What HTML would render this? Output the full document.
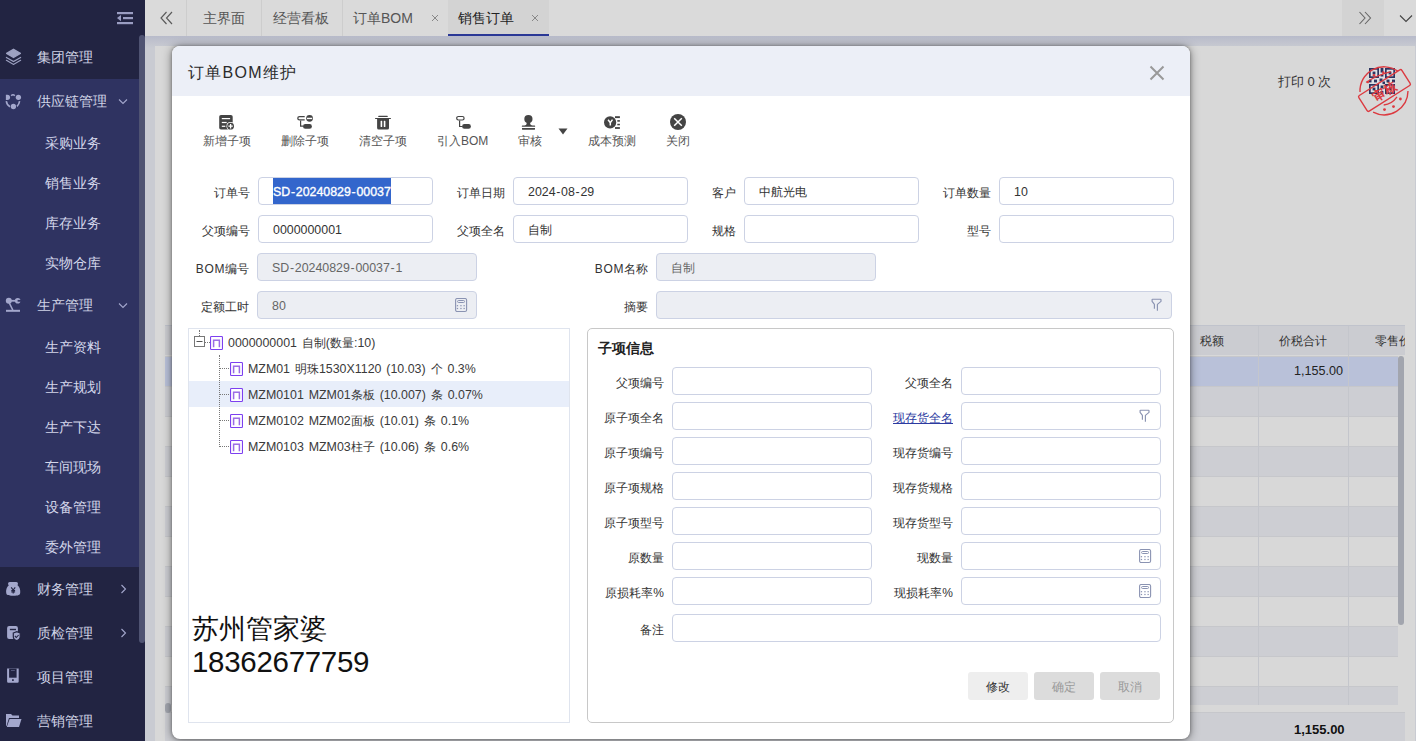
<!DOCTYPE html>
<html><head><meta charset="utf-8">
<style>
*{box-sizing:border-box}
html,body{margin:0;padding:0;width:1416px;height:741px;overflow:hidden;font-family:"Liberation Sans",sans-serif;background:#c9cbd2}
#band{position:absolute;left:145px;top:36px;width:1271px;height:12px;background:linear-gradient(#b8bbca,#c9cbd2)}
.a{position:absolute;white-space:nowrap}
#side{position:absolute;left:0;top:0;width:145px;height:741px;background:#222442;overflow:hidden}
#sub1{position:absolute;left:0;top:79px;width:139px;height:488px;background:#2f3361}
.mt{position:absolute;left:37px;font-size:14px;line-height:20px;color:#d0d3e6}
.st{position:absolute;left:45px;font-size:14px;line-height:20px;color:#d3d6ea}
#tabs{position:absolute;left:145px;top:0;width:1271px;height:36px;background:#dadada}
.tsep{position:absolute;top:0;width:1px;height:36px;background:#cdcdcd}
.tt{position:absolute;top:8px;font-size:14px;line-height:20px;color:#555}
#panel{position:absolute;left:155px;top:46px;width:1260px;height:695px;background:#d8d8d8}
#modal{position:absolute;left:172px;top:46px;width:1018px;height:693px;background:#fff;border-radius:8px;box-shadow:0 0 3px rgba(0,0,0,.3),0 1px 10px rgba(0,0,0,.5);overflow:hidden}
#mhead{position:absolute;left:0;top:0;width:1018px;height:50px;background:#eceff7}
.lbl{position:absolute;font-size:12px;line-height:16px;color:#444;text-align:right}
.inp{position:absolute;height:28px;border:1px solid #c7cfe6;border-radius:3px;background:#fff}
.inp.dis{background:#eceef3}
.itx{position:absolute;left:14px;top:5px;font-size:13px;line-height:16px;color:#333;white-space:nowrap}
.tb{position:absolute;top:27px;font-size:12px;line-height:16px;color:#555;white-space:nowrap}
</style></head><body>

<!-- SIDEBAR -->
<div id="side">
  <div id="sub1"></div>
  <div class="mt" style="top:47px">集团管理</div>
  <div class="mt" style="top:91px">供应链管理</div>
  <div class="st" style="top:133px">采购业务</div>
  <div class="st" style="top:173px">销售业务</div>
  <div class="st" style="top:213px">库存业务</div>
  <div class="st" style="top:253px">实物仓库</div>
  <div class="mt" style="top:295px">生产管理</div>
  <div class="st" style="top:337px">生产资料</div>
  <div class="st" style="top:377px">生产规划</div>
  <div class="st" style="top:417px">生产下达</div>
  <div class="st" style="top:457px">车间现场</div>
  <div class="st" style="top:497px">设备管理</div>
  <div class="st" style="top:537px">委外管理</div>
  <div class="mt" style="top:579px">财务管理</div>
  <div class="mt" style="top:623px">质检管理</div>
  <div class="mt" style="top:667px">项目管理</div>
  <div class="mt" style="top:711px">营销管理</div>

  <svg class="a" style="left:5px;top:48px" width="17" height="17" viewBox="0 0 17 17"><path d="M8.5 1.2 L15.4 5.4 L8.5 9.5 L1.6 5.4 Z" fill="#9ea2c2" stroke="#9ea2c2" stroke-width="1.3" stroke-linejoin="round"/><path d="M1.4 9.4 L8.5 13.5 L15.6 9.4" fill="none" stroke="#9ea2c2" stroke-width="1.2" stroke-linecap="round"/><path d="M1.4 12.3 L8.5 16.4 L15.6 12.3" fill="none" stroke="#9ea2c2" stroke-width="1.2" stroke-linecap="round"/></svg>
  <svg class="a" style="left:5px;top:93px" width="17" height="17" viewBox="0 0 17 17"><path d="M0.9 1.7 H2.4 A2.65 2.65 0 0 1 2.4 7 H0.9 Z" fill="#a3a7cc"/><circle cx="13.4" cy="4.35" r="2.65" fill="#a3a7cc"/><circle cx="8.4" cy="13.5" r="2.65" fill="#a3a7cc"/><path d="M6.2 2.7 Q8 0.7 9.8 2.7" stroke="#a3a7cc" stroke-width="1.5" fill="none"/><path d="M1.3 8.2 Q1.8 12 5 13.8" stroke="#a3a7cc" stroke-width="1.6" fill="none"/><path d="M14.6 8.2 Q14.2 11.2 12 13.4" stroke="#a3a7cc" stroke-width="1.6" fill="none"/></svg>
  <svg class="a" style="left:5px;top:297px" width="16" height="16" viewBox="0 0 16 16"><circle cx="3.8" cy="3.8" r="3" fill="#a3a7cc"/><path d="M5 3.8 L11 3.8" stroke="#a3a7cc" stroke-width="1.8"/><circle cx="12.7" cy="3.8" r="2.8" fill="#a3a7cc"/><rect x="12.6" y="2.9" width="3.4" height="1.8" fill="#2f3361"/><path d="M4.3 6 L7.8 13" stroke="#a3a7cc" stroke-width="1.6"/><rect x="1" y="12.8" width="14" height="2" fill="#a3a7cc"/></svg>
  <svg class="a" style="left:5px;top:582px" width="16" height="15" viewBox="0 0 16 15"><rect x="3" y="0" width="10" height="3.4" rx="1.7" fill="#a3a7cc"/><path d="M4.9 2.5 H11.5 C14.8 4.5 15.5 8 15.2 10.8 C15 13 13.5 13.8 8.2 13.8 C2.9 13.8 1.4 13 1.2 10.8 C0.9 8 1.6 4.5 4.9 2.5 Z" fill="#a3a7cc"/><path d="M6.2 5.3 L8.2 8 L10.2 5.3 M8.2 8 V11.4 M6.3 8.6 H10.1 M6.3 10 H10.1" stroke="#222442" stroke-width="1.1" fill="none"/></svg>
  <svg class="a" style="left:6px;top:625px" width="16" height="17" viewBox="0 0 16 17"><rect x="1.1" y="1" width="10.8" height="13" rx="2" fill="#a3a7cc"/><rect x="3.9" y="3.8" width="6.1" height="1.4" fill="#222442"/><path d="M7.3 8 L10.75 6.6 L14.2 8 V11.5 C14.2 13.8 12.3 15.2 10.75 15.6 C9.2 15.2 7.3 13.8 7.3 11.5 Z" fill="#a3a7cc" stroke="#222442" stroke-width="1.2"/><path d="M8.9 11 L10.3 12.5 L12.6 10" stroke="#222442" stroke-width="1.1" fill="none"/></svg>
  <svg class="a" style="left:6px;top:667px" width="14" height="17" viewBox="0 0 14 17"><path d="M1.1 1.6 H12.7 V14.6 A1.2 1.2 0 0 1 11.5 15.8 H2.3 A1.2 1.2 0 0 1 1.1 14.6 Z" fill="#a3a7cc"/><rect x="3.1" y="1.6" width="7.5" height="9.1" fill="#222442"/><rect x="5" y="3" width="3.8" height="0.9" fill="#5a5d80"/><rect x="6" y="12.3" width="1.8" height="1.6" fill="#222442"/></svg>
  <svg class="a" style="left:5px;top:712px" width="17" height="16" viewBox="0 0 17 16"><path d="M1 2 L6 2 L7.5 3.5 L14 3.5 L14 6 L4 6 L1.5 14 L1 14 Z" fill="#a3a7cc"/><path d="M4.6 7 L16.5 7 L14 15 L1.8 15 Z" fill="#a3a7cc"/></svg>
  <svg class="a" style="left:118px;top:98px" width="10" height="7" viewBox="0 0 10 7"><path d="M1 1.5 L5 5.5 L9 1.5" stroke="#a3a7cc" stroke-width="1.1" fill="none"/></svg>
  <svg class="a" style="left:118px;top:302px" width="10" height="7" viewBox="0 0 10 7"><path d="M1 1.5 L5 5.5 L9 1.5" stroke="#a3a7cc" stroke-width="1.1" fill="none"/></svg>
  <svg class="a" style="left:120px;top:584px" width="8" height="10" viewBox="0 0 8 10"><path d="M1.5 1 L5.5 5 L1.5 9" stroke="#a3a7cc" stroke-width="1.1" fill="none"/></svg>
  <svg class="a" style="left:120px;top:628px" width="8" height="10" viewBox="0 0 8 10"><path d="M1.5 1 L5.5 5 L1.5 9" stroke="#a3a7cc" stroke-width="1.1" fill="none"/></svg>
  <svg class="a" style="left:116px;top:11px" width="18" height="14" viewBox="0 0 18 14"><rect x="1" y="1" width="16" height="2.2" fill="#9a9dc2"/><rect x="7" y="6" width="10" height="2.2" fill="#9a9dc2"/><rect x="1" y="11" width="16" height="2.2" fill="#9a9dc2"/><path d="M1 7.1 L5 4 L5 10.2 Z" fill="#9a9dc2"/></svg>
  <div style="position:absolute;left:139px;top:35px;width:6px;height:608px;background:#4f5372;border-radius:3px"></div>
</div>

<!-- TABS -->
<div id="tabs">
  <div class="tsep" style="left:41px"></div>
  <div class="tsep" style="left:116px"></div>
  <div class="tsep" style="left:197px"></div>
  <div style="position:absolute;left:303px;top:0;width:101px;height:36px;background:#d3d3d3;border-bottom:2px solid #2a3896"></div>
  <div class="tt" style="left:58px">主界面</div>
  <div class="tt" style="left:128px">经营看板</div>
  <div class="tt" style="left:208px">订单BOM</div>
  <div class="tt" style="left:313px;color:#222">销售订单</div>
  <div style="position:absolute;left:1197px;top:0;width:42px;height:36px;background:#d3d3d3"></div>
  <svg class="a" style="left:15px;top:11px" width="13" height="14" viewBox="0 0 13 14"><path d="M6.5 1 L1 7 L6.5 13 M12 1 L6.5 7 L12 13" stroke="#5a5a5a" stroke-width="1.15" fill="none"/></svg>
  <svg class="a" style="left:286px;top:14px" width="8" height="8" viewBox="0 0 8 8"><path d="M1 1 L7 7 M7 1 L1 7" stroke="#888" stroke-width="1"/></svg>
  <svg class="a" style="left:386px;top:14px" width="8" height="8" viewBox="0 0 8 8"><path d="M1 1 L7 7 M7 1 L1 7" stroke="#888" stroke-width="1"/></svg>
  <svg class="a" style="left:1213px;top:11px" width="14" height="14" viewBox="0 0 14 14"><path d="M1.5 1 L7 7 L1.5 13 M7 1 L12.5 7 L7 13" stroke="#666" stroke-width="1.1" fill="none"/></svg>
  <svg class="a" style="left:1254px;top:14px" width="14" height="9" viewBox="0 0 14 9"><path d="M1 1.5 L7 7.5 L13 1.5" stroke="#444" stroke-width="1.1" fill="none"/></svg>

</div>

<div id="band"></div>
<!-- PANEL -->
<div id="panel"></div>

<div class="a" style="left:1278px;top:72px;font-size:13px;line-height:20px;color:#333">打印 0 次</div>
<svg class="a" style="left:1369px;top:68px" width="26" height="26" viewBox="0 0 26 26"><rect width="26" height="26" fill="#dedfe3"/><rect x="0" y="0" width="10" height="10" fill="#2d3561"/><rect x="1.7" y="1.7" width="6.6" height="6.6" fill="#dedfe3"/><rect x="3.6" y="3.6" width="2.8" height="2.8" fill="#2d3561"/><rect x="16" y="0" width="10" height="10" fill="#2d3561"/><rect x="17.7" y="1.7" width="6.6" height="6.6" fill="#dedfe3"/><rect x="19.6" y="3.6" width="2.8" height="2.8" fill="#2d3561"/><rect x="0" y="16" width="10" height="10" fill="#2d3561"/><rect x="1.7" y="17.7" width="6.6" height="6.6" fill="#dedfe3"/><rect x="3.6" y="19.6" width="2.8" height="2.8" fill="#2d3561"/><rect x="16" y="16" width="10" height="10" fill="#2d3561"/><rect x="17.7" y="17.7" width="6.6" height="6.6" fill="#dedfe3"/><rect x="19.6" y="19.6" width="2.8" height="2.8" fill="#2d3561"/><rect x="11.6" y="0" width="2.8" height="4.5" fill="#2d3561"/><rect x="11.6" y="6.5" width="2.8" height="2" fill="#2d3561"/><rect x="0" y="11.6" width="2.5" height="2.8" fill="#2d3561"/><rect x="5" y="11.6" width="3" height="2.8" fill="#2d3561"/><rect x="10.5" y="10.5" width="3" height="3" fill="#2d3561"/><rect x="13.5" y="13.5" width="2.5" height="2.5" fill="#2d3561"/><rect x="17.5" y="11.6" width="3" height="2.8" fill="#2d3561"/><rect x="23" y="11.6" width="3" height="2.8" fill="#2d3561"/><rect x="11.6" y="17.5" width="2.8" height="3" fill="#2d3561"/><rect x="11.6" y="23" width="2.8" height="3" fill="#2d3561"/></svg>
<svg class="a" style="left:1355px;top:62px" width="61" height="56" viewBox="0 0 61 56">
<g fill="none" stroke="#dc3a40" stroke-width="1.4">
<path d="M5.03 30.06 A24 24 0 0 1 42.77 9.14"/><path d="M53 29 A24 24 0 0 1 18.1 50.18"/>
<rect x="4.05" y="19.25" width="50.9" height="18.5" rx="1.5" transform="rotate(-32.3 29.5 28.5)"/>
<path d="M11 20.4 Q22 13 36 9.6" stroke-width="1.1"/>
<path d="M28.7 43 Q37 42 42 34.8" stroke-width="1.3"/>
</g>
<g fill="#dc3a40"><circle cx="12.8" cy="20" r="1.3"/><circle cx="19" cy="13.2" r="1.3"/><circle cx="28.3" cy="10.6" r="1.3"/><circle cx="45.4" cy="37" r="1.4"/><circle cx="38.5" cy="44.6" r="1.4"/><circle cx="29.5" cy="47.6" r="1.4"/></g>
<text transform="translate(29.5 29.5) rotate(-32.3)" x="0" y="4.5" text-anchor="middle" font-size="12.5" font-weight="bold" fill="#dc3a40" font-family="Liberation Sans">审核</text>
</svg>
<div class="a" style="left:165px;top:325px;width:1240px;height:30px;background:#cbccd1;border-top:1px solid #c0c3cc"></div>
<div class="a" style="left:165px;top:356px;width:1233px;height:30px;background:#b9c1d9;border-top:1px solid #c6c7cb"></div>
<div class="a" style="left:165px;top:386px;width:1233px;height:30px;background:#cdced3;border-top:1px solid #c6c7cb"></div>
<div class="a" style="left:165px;top:416px;width:1233px;height:30px;background:#d8d8d8;border-top:1px solid #c6c7cb"></div>
<div class="a" style="left:165px;top:446px;width:1233px;height:30px;background:#cdced3;border-top:1px solid #c6c7cb"></div>
<div class="a" style="left:165px;top:476px;width:1233px;height:30px;background:#d8d8d8;border-top:1px solid #c6c7cb"></div>
<div class="a" style="left:165px;top:506px;width:1233px;height:30px;background:#cdced3;border-top:1px solid #c6c7cb"></div>
<div class="a" style="left:165px;top:536px;width:1233px;height:30px;background:#d8d8d8;border-top:1px solid #c6c7cb"></div>
<div class="a" style="left:165px;top:566px;width:1233px;height:30px;background:#cdced3;border-top:1px solid #c6c7cb"></div>
<div class="a" style="left:165px;top:596px;width:1233px;height:30px;background:#d8d8d8;border-top:1px solid #c6c7cb"></div>
<div class="a" style="left:165px;top:626px;width:1233px;height:30px;background:#cdced3;border-top:1px solid #c6c7cb"></div>
<div class="a" style="left:165px;top:656px;width:1233px;height:30px;background:#d8d8d8;border-top:1px solid #c6c7cb"></div>
<div class="a" style="left:165px;top:686px;width:1233px;height:19px;background:#cdced3;border-top:1px solid #c6c7cb"></div>
<div class="a" style="left:1258px;top:326px;width:1px;height:379px;background:#c4c6cc"></div>
<div class="a" style="left:1258px;top:712px;width:1px;height:29px;background:#c4c6cc"></div>
<div class="a" style="left:1348px;top:326px;width:1px;height:379px;background:#c4c6cc"></div>
<div class="a" style="left:1348px;top:712px;width:1px;height:29px;background:#c4c6cc"></div>
<div class="a" style="left:165px;top:705px;width:1240px;height:7px;background:#d8d8d8"></div>
<div class="a" style="left:165px;top:712px;width:1240px;height:29px;background:#cdced3;border-top:1px solid #c6c7cb"></div>
<div class="a" style="left:1398px;top:356px;width:6px;height:269px;background:#a2a5ae;border-radius:3px"></div>
<div class="a" style="left:1200px;top:332px;font-size:12px;line-height:18px;color:#333">税额</div>
<div class="a" style="left:1279px;top:332px;font-size:12px;line-height:18px;color:#333">价税合计</div>
<div class="a" style="left:1349px;top:326px;width:56px;height:29px;overflow:hidden"><div class="a" style="left:26px;top:6px;font-size:12px;line-height:18px;color:#333">零售价</div></div>
<div class="a" style="left:1294px;top:362px;font-size:12.6px;line-height:18px;color:#222">1,155.00</div>
<div class="a" style="left:1294px;top:721px;font-size:13px;line-height:18px;color:#111;font-weight:bold">1,155.00</div>
<div class="a" style="left:165px;top:703px;width:6px;height:10px;background:#a2a5ae;border-radius:3px"></div>
<div id="modal"><div id="mhead"></div></div>
<div class="a" style="left:188px;top:62.5px;font-size:16px;line-height:20px;color:#2a2a2a;letter-spacing:1.3px">订单BOM维护</div>
<svg class="a" style="left:1149px;top:65px" width="16" height="16" viewBox="0 0 16 16"><path d="M1.5 1.5 L14.5 14.5 M14.5 1.5 L1.5 14.5" stroke="#999" stroke-width="2"/></svg>
<div class="a" style="left:203px;top:132.5px;font-size:12px;line-height:16px;color:#555">新增子项</div>
<div class="a" style="left:281px;top:132.5px;font-size:12px;line-height:16px;color:#555">删除子项</div>
<div class="a" style="left:359px;top:132.5px;font-size:12px;line-height:16px;color:#555">清空子项</div>
<div class="a" style="left:437px;top:132.5px;font-size:12px;line-height:16px;color:#555">引入BOM</div>
<div class="a" style="left:518px;top:132.5px;font-size:12px;line-height:16px;color:#555">审核</div>
<div class="a" style="left:588px;top:132.5px;font-size:12px;line-height:16px;color:#555">成本预测</div>
<div class="a" style="left:666px;top:132.5px;font-size:12px;line-height:16px;color:#555">关闭</div>
<svg class="a" style="left:218px;top:114px" width="18" height="17" viewBox="0 0 18 17"><rect x="1.2" y="1" width="13.5" height="14.6" rx="1.8" fill="#444"/><rect x="3.8" y="4" width="8.3" height="1.2" fill="#fff"/><rect x="3.8" y="7.9" width="4.9" height="1.2" fill="#fff"/><rect x="3.8" y="11.7" width="3.5" height="1.2" fill="#fff"/><circle cx="12.6" cy="12.2" r="4.1" fill="#fff"/><circle cx="12.6" cy="12.2" r="3.4" fill="#444"/><path d="M12.6 10 V14.4 M10.4 12.2 H14.8" stroke="#fff" stroke-width="1.3"/></svg>
<svg class="a" style="left:296px;top:114px" width="18" height="16" viewBox="0 0 18 16"><path d="M8.7 2.55 H3.5 A1.7 1.7 0 0 0 3.5 5.95 H8.7" stroke="#444" stroke-width="1.3" fill="none"/><circle cx="13.55" cy="4.35" r="3.4" fill="#444"/><rect x="10.9" y="3.75" width="5.3" height="1.4" fill="#fff"/><path d="M4.6 6.5 V12.1 H7.5" stroke="#444" stroke-width="1.2" fill="none"/><rect x="7" y="10.1" width="8.9" height="4.6" rx="2.3" fill="#444"/></svg>
<svg class="a" style="left:374px;top:115px" width="18" height="16" viewBox="0 0 18 16"><rect x="4.2" y="0.8" width="9.6" height="1.2" rx="0.6" fill="#444"/><rect x="1" y="2.9" width="16" height="1.1" rx="0.5" fill="#444"/><path d="M3.1 3.5 H15 V13 A1.6 1.6 0 0 1 13.4 14.6 H4.7 A1.6 1.6 0 0 1 3.1 13 Z" fill="#444"/><rect x="6.6" y="5.8" width="1.6" height="6.3" rx="0.6" fill="#fff"/><rect x="9.8" y="5.8" width="1.6" height="6.3" rx="0.6" fill="#fff"/></svg>
<svg class="a" style="left:455px;top:115px" width="17" height="15" viewBox="0 0 17 15"><rect x="1.7" y="1.5" width="7.4" height="3.5" rx="1.7" stroke="#444" stroke-width="1.2" fill="none"/><path d="M4.6 5.6 V11.5 H7.5" stroke="#444" stroke-width="1.2" fill="none"/><rect x="7.1" y="9.1" width="8.8" height="4.6" rx="2.3" fill="#444"/></svg>
<svg class="a" style="left:521px;top:114px" width="15" height="17" viewBox="0 0 15 17"><circle cx="7.4" cy="5.1" r="4.1" fill="#444"/><path d="M5.6 8 H9.2 V10 Q9.5 11.4 11.5 11.5 H13.6 Q14.2 11.6 14.2 12.2 Q14.2 12.8 13.6 12.8 H1.4 Q0.8 12.8 0.8 12.2 Q0.8 11.6 1.4 11.5 H3.4 Q5.4 11.4 5.6 10 Z" fill="#444"/><path d="M1 14 H14 V14.9 A0.9 0.9 0 0 1 13.1 15.8 H1.9 A0.9 0.9 0 0 1 1 14.9 Z" fill="#444"/></svg>
<svg class="a" style="left:558px;top:128px" width="10" height="7" viewBox="0 0 10 7"><path d="M0.5 0.5 H9.5 L5 6.5 Z" fill="#444"/></svg>
<svg class="a" style="left:603px;top:115px" width="18" height="15" viewBox="0 0 18 15"><circle cx="7.1" cy="7.4" r="6.1" fill="#444"/><path d="M5.1 4.7 L7.3 7.7 L9.5 4.6 M7.3 7.5 V10.6" stroke="#fff" stroke-width="1.5" fill="none"/><rect x="12" y="1.2" width="4.9" height="1.9" fill="#444"/><rect x="14.3" y="5.1" width="2.6" height="1.6" fill="#444"/><rect x="14.3" y="8.8" width="2.6" height="1.5" fill="#444"/><rect x="12" y="12.1" width="4.9" height="1.8" fill="#444"/></svg>
<svg class="a" style="left:669px;top:113px" width="18" height="18" viewBox="0 0 18 18"><circle cx="9" cy="9" r="8" fill="#444"/><path d="M5.2 5.2 L12.8 12.8 M12.8 5.2 L5.2 12.8" stroke="#fff" stroke-width="1.5"/></svg>
<div class="a" style="right:1166px;top:179px;font-size:12px;line-height:28px;color:#333;">订单号</div>
<div class="a" style="right:911px;top:179px;font-size:12px;line-height:28px;color:#333;">订单日期</div>
<div class="a" style="right:680px;top:179px;font-size:12px;line-height:28px;color:#333;">客户</div>
<div class="a" style="right:425px;top:179px;font-size:12px;line-height:28px;color:#333;">订单数量</div>
<div class="a" style="left:258px;top:177px;width:175px;height:28px;border:1px solid #ccd2e4;border-radius:4px;background:#fff"></div>
<div class="a" style="left:273px;top:178px;width:118px;height:26px;background:#3366cc"></div>
<div class="a" style="left:273px;top:179px;font-size:12.4px;line-height:26px;color:#fff;-webkit-text-stroke:0.35px #fff">SD<span style="margin:0 0.7px">-</span>20240829<span style="margin:0 0.7px">-</span>00037</div>
<div class="a" style="left:513px;top:177px;width:175px;height:28px;border:1px solid #ccd2e4;border-radius:4px;background:#fff"></div>
<div class="a" style="left:528px;top:179px;font-size:12.4px;line-height:26px;color:#333">2024<span style="margin:0 0.7px">-</span>08<span style="margin:0 0.7px">-</span>29</div>
<div class="a" style="left:744px;top:177px;width:175px;height:28px;border:1px solid #ccd2e4;border-radius:4px;background:#fff"></div>
<div class="a" style="left:759px;top:179px;font-size:12.4px;line-height:26px;color:#333"><span style="font-size:12px">中航光电</span></div>
<div class="a" style="left:999px;top:177px;width:175px;height:28px;border:1px solid #ccd2e4;border-radius:4px;background:#fff"></div>
<div class="a" style="left:1014px;top:179px;font-size:12.4px;line-height:26px;color:#333">10</div>
<div class="a" style="right:1166px;top:217px;font-size:12px;line-height:28px;color:#333;">父项编号</div>
<div class="a" style="right:911px;top:217px;font-size:12px;line-height:28px;color:#333;">父项全名</div>
<div class="a" style="right:680px;top:217px;font-size:12px;line-height:28px;color:#333;">规格</div>
<div class="a" style="right:425px;top:217px;font-size:12px;line-height:28px;color:#333;">型号</div>
<div class="a" style="left:258px;top:215px;width:175px;height:28px;border:1px solid #ccd2e4;border-radius:4px;background:#fff"></div>
<div class="a" style="left:273px;top:217px;font-size:12.4px;line-height:26px;color:#333">0000000001</div>
<div class="a" style="left:513px;top:215px;width:175px;height:28px;border:1px solid #ccd2e4;border-radius:4px;background:#fff"></div>
<div class="a" style="left:528px;top:217px;font-size:12.4px;line-height:26px;color:#333"><span style="font-size:12px">自制</span></div>
<div class="a" style="left:744px;top:215px;width:175px;height:28px;border:1px solid #ccd2e4;border-radius:4px;background:#fff"></div>
<div class="a" style="left:999px;top:215px;width:175px;height:28px;border:1px solid #ccd2e4;border-radius:4px;background:#fff"></div>
<div class="a" style="right:1167px;top:255px;font-size:12px;line-height:28px;color:#333;"><span style="letter-spacing:0.6px">BOM</span>编号</div>
<div class="a" style="right:768px;top:255px;font-size:12px;line-height:28px;color:#333;"><span style="letter-spacing:0.6px">BOM</span>名称</div>
<div class="a" style="left:257px;top:253px;width:220px;height:28px;border:1px solid #ccd2e4;border-radius:4px;background:#eceef3"></div>
<div class="a" style="left:272px;top:255px;font-size:12.4px;line-height:26px;color:#666">SD<span style="margin:0 0.7px">-</span>20240829<span style="margin:0 0.7px">-</span>00037<span style="margin:0 0.7px">-</span>1</div>
<div class="a" style="left:656px;top:253px;width:220px;height:28px;border:1px solid #ccd2e4;border-radius:4px;background:#eceef3"></div>
<div class="a" style="left:671px;top:255px;font-size:12.4px;line-height:26px;color:#666"><span style="font-size:12px">自制</span></div>
<div class="a" style="right:1167px;top:293px;font-size:12px;line-height:28px;color:#333;">定额工时</div>
<div class="a" style="right:768px;top:293px;font-size:12px;line-height:28px;color:#333;">摘要</div>
<div class="a" style="left:257px;top:291px;width:220px;height:28px;border:1px solid #ccd2e4;border-radius:4px;background:#eceef3"></div>
<div class="a" style="left:272px;top:293px;font-size:12.4px;line-height:26px;color:#666">80</div>
<div class="a" style="left:656px;top:291px;width:516px;height:28px;border:1px solid #ccd2e4;border-radius:4px;background:#eceef3"></div>
<svg class="a" style="left:455px;top:298px" width="13" height="15" viewBox="0 0 13 15"><rect x="0.6" y="0.5" width="11" height="13" rx="1.6" stroke="#8a93b2" stroke-width="1.1" fill="none"/><rect x="2.6" y="2.5" width="6.9" height="2" rx="0.9" stroke="#8a93b2" stroke-width="1" fill="none"/><g fill="#8a93b2"><rect x="1.8" y="7.1" width="1.3" height="1.2"/><rect x="5.3" y="7.1" width="1.3" height="1.2"/><rect x="8.5" y="7.1" width="1.3" height="1.2"/><rect x="1.8" y="9.9" width="1.3" height="1.2"/><rect x="5.3" y="9.9" width="1.3" height="1.2"/><rect x="8.5" y="9.9" width="1.3" height="1.2"/></g></svg>
<svg class="a" style="left:1151px;top:298px" width="12" height="14" viewBox="0 0 12 14"><path d="M3.4 10.8 V6.4 L1.1 3.4 V1.7 Q1.1 1.2 1.6 1.2 H9.5 Q10 1.2 10 1.7 V3.4 L6.4 6.4 V12.7" stroke="#8a93b2" stroke-width="1.15" fill="none" stroke-linejoin="round"/></svg>
<div class="a" style="left:188px;top:328px;width:382px;height:395px;border:1px solid #dfe4ee"></div>
<div class="a" style="left:189px;top:381px;width:380px;height:26px;background:#e8eefa"></div>
<div class="a" style="left:199px;top:330px;width:0;height:6px;border-left:1px dotted #777"></div>
<svg class="a" style="left:194px;top:336px" width="11" height="11" viewBox="0 0 11 11"><rect x="0.5" y="0.5" width="10" height="10" stroke="#777" fill="#fff"/><path d="M2.5 5.5 H8.5" stroke="#555"/></svg>
<div class="a" style="left:205px;top:342px;width:5px;height:0;border-top:1px dotted #777"></div>
<svg class="a" style="left:210px;top:336px" width="13" height="14" viewBox="0 0 13 14"><rect x="0.55" y="0.55" width="11.9" height="12.9" rx="0.8" stroke="#7d40f0" stroke-width="1.1" fill="#fff"/><path d="M3.6 11.2 V4.2 H9.4 V11.2" stroke="#9b6ae6" stroke-width="1.5" fill="none"/><path d="M3.6 3.6 H9.4" stroke="#c8b0f0" stroke-width="0.8"/></svg>
<div class="a" style="left:228px;top:333.5px;font-size:12.4px;line-height:18px;color:#3a3a3a;word-spacing:1.5px">0000000001 自制(数量:10)</div>
<div class="a" style="left:219px;top:355px;width:0;height:92px;border-left:1px dotted #777"></div>
<div class="a" style="left:220px;top:368px;width:9px;height:0;border-top:1px dotted #777"></div>
<svg class="a" style="left:230px;top:362px" width="13" height="14" viewBox="0 0 13 14"><rect x="0.55" y="0.55" width="11.9" height="12.9" rx="0.8" stroke="#7d40f0" stroke-width="1.1" fill="#fff"/><path d="M3.6 11.2 V4.2 H9.4 V11.2" stroke="#9b6ae6" stroke-width="1.5" fill="none"/><path d="M3.6 3.6 H9.4" stroke="#c8b0f0" stroke-width="0.8"/></svg>
<div class="a" style="left:248px;top:359.5px;font-size:12.4px;line-height:18px;color:#3a3a3a;word-spacing:1.5px">MZM01 明珠1530X1120 (10.03) 个 0.3%</div>
<div class="a" style="left:220px;top:394px;width:9px;height:0;border-top:1px dotted #777"></div>
<svg class="a" style="left:230px;top:388px" width="13" height="14" viewBox="0 0 13 14"><rect x="0.55" y="0.55" width="11.9" height="12.9" rx="0.8" stroke="#7d40f0" stroke-width="1.1" fill="#fff"/><path d="M3.6 11.2 V4.2 H9.4 V11.2" stroke="#9b6ae6" stroke-width="1.5" fill="none"/><path d="M3.6 3.6 H9.4" stroke="#c8b0f0" stroke-width="0.8"/></svg>
<div class="a" style="left:248px;top:385.5px;font-size:12.4px;line-height:18px;color:#3a3a3a;word-spacing:1.5px">MZM0101 MZM01条板 (10.007) 条 0.07%</div>
<div class="a" style="left:220px;top:420px;width:9px;height:0;border-top:1px dotted #777"></div>
<svg class="a" style="left:230px;top:414px" width="13" height="14" viewBox="0 0 13 14"><rect x="0.55" y="0.55" width="11.9" height="12.9" rx="0.8" stroke="#7d40f0" stroke-width="1.1" fill="#fff"/><path d="M3.6 11.2 V4.2 H9.4 V11.2" stroke="#9b6ae6" stroke-width="1.5" fill="none"/><path d="M3.6 3.6 H9.4" stroke="#c8b0f0" stroke-width="0.8"/></svg>
<div class="a" style="left:248px;top:411.5px;font-size:12.4px;line-height:18px;color:#3a3a3a;word-spacing:1.5px">MZM0102 MZM02面板 (10.01) 条 0.1%</div>
<div class="a" style="left:220px;top:446px;width:9px;height:0;border-top:1px dotted #777"></div>
<svg class="a" style="left:230px;top:440px" width="13" height="14" viewBox="0 0 13 14"><rect x="0.55" y="0.55" width="11.9" height="12.9" rx="0.8" stroke="#7d40f0" stroke-width="1.1" fill="#fff"/><path d="M3.6 11.2 V4.2 H9.4 V11.2" stroke="#9b6ae6" stroke-width="1.5" fill="none"/><path d="M3.6 3.6 H9.4" stroke="#c8b0f0" stroke-width="0.8"/></svg>
<div class="a" style="left:248px;top:437.5px;font-size:12.4px;line-height:18px;color:#3a3a3a;word-spacing:1.5px">MZM0103 MZM03柱子 (10.06) 条 0.6%</div>
<div class="a" style="left:192px;top:612px;font-size:27px;line-height:34px;color:#111">苏州管家婆</div>
<div class="a" style="left:192px;top:645px;font-size:29.5px;line-height:34px;color:#111;letter-spacing:-0.3px">18362677759</div>
<div class="a" style="left:587px;top:328px;width:587px;height:395px;border:1px solid #c8c8c8;border-radius:5px"></div>
<div class="a" style="left:598px;top:339px;font-size:14px;line-height:18px;color:#222;font-weight:bold;left:598px">子项信息</div>
<div class="a" style="right:752px;top:369px;font-size:12px;line-height:28px;color:#333;">父项编号</div>
<div class="a" style="right:463px;top:369px;font-size:12px;line-height:28px;color:#333;">父项全名</div>
<div class="a" style="left:672px;top:367px;width:200px;height:28px;border:1px solid #ccd2e4;border-radius:4px;background:#fff"></div>
<div class="a" style="left:961px;top:367px;width:200px;height:28px;border:1px solid #ccd2e4;border-radius:4px;background:#fff"></div>
<div class="a" style="right:752px;top:404px;font-size:12px;line-height:28px;color:#333;">原子项全名</div>
<div class="a" style="right:463px;top:404px;font-size:12px;line-height:28px;color:#333;color:#2c3aa0;text-decoration:underline">现存货全名</div>
<div class="a" style="left:672px;top:402px;width:200px;height:28px;border:1px solid #ccd2e4;border-radius:4px;background:#fff"></div>
<div class="a" style="left:961px;top:402px;width:200px;height:28px;border:1px solid #ccd2e4;border-radius:4px;background:#fff"></div>
<div class="a" style="right:752px;top:439px;font-size:12px;line-height:28px;color:#333;">原子项编号</div>
<div class="a" style="right:463px;top:439px;font-size:12px;line-height:28px;color:#333;">现存货编号</div>
<div class="a" style="left:672px;top:437px;width:200px;height:28px;border:1px solid #ccd2e4;border-radius:4px;background:#fff"></div>
<div class="a" style="left:961px;top:437px;width:200px;height:28px;border:1px solid #ccd2e4;border-radius:4px;background:#fff"></div>
<div class="a" style="right:752px;top:474px;font-size:12px;line-height:28px;color:#333;">原子项规格</div>
<div class="a" style="right:463px;top:474px;font-size:12px;line-height:28px;color:#333;">现存货规格</div>
<div class="a" style="left:672px;top:472px;width:200px;height:28px;border:1px solid #ccd2e4;border-radius:4px;background:#fff"></div>
<div class="a" style="left:961px;top:472px;width:200px;height:28px;border:1px solid #ccd2e4;border-radius:4px;background:#fff"></div>
<div class="a" style="right:752px;top:509px;font-size:12px;line-height:28px;color:#333;">原子项型号</div>
<div class="a" style="right:463px;top:509px;font-size:12px;line-height:28px;color:#333;">现存货型号</div>
<div class="a" style="left:672px;top:507px;width:200px;height:28px;border:1px solid #ccd2e4;border-radius:4px;background:#fff"></div>
<div class="a" style="left:961px;top:507px;width:200px;height:28px;border:1px solid #ccd2e4;border-radius:4px;background:#fff"></div>
<div class="a" style="right:752px;top:544px;font-size:12px;line-height:28px;color:#333;">原数量</div>
<div class="a" style="right:463px;top:544px;font-size:12px;line-height:28px;color:#333;">现数量</div>
<div class="a" style="left:672px;top:542px;width:200px;height:28px;border:1px solid #ccd2e4;border-radius:4px;background:#fff"></div>
<div class="a" style="left:961px;top:542px;width:200px;height:28px;border:1px solid #ccd2e4;border-radius:4px;background:#fff"></div>
<div class="a" style="right:752px;top:579px;font-size:12px;line-height:28px;color:#333;">原损耗率%</div>
<div class="a" style="right:463px;top:579px;font-size:12px;line-height:28px;color:#333;">现损耗率%</div>
<div class="a" style="left:672px;top:577px;width:200px;height:28px;border:1px solid #ccd2e4;border-radius:4px;background:#fff"></div>
<div class="a" style="left:961px;top:577px;width:200px;height:28px;border:1px solid #ccd2e4;border-radius:4px;background:#fff"></div>
<svg class="a" style="left:1139px;top:409px" width="12" height="14" viewBox="0 0 12 14"><path d="M3.4 10.8 V6.4 L1.1 3.4 V1.7 Q1.1 1.2 1.6 1.2 H9.5 Q10 1.2 10 1.7 V3.4 L6.4 6.4 V12.7" stroke="#8a93b2" stroke-width="1.15" fill="none" stroke-linejoin="round"/></svg>
<svg class="a" style="left:1139px;top:549px" width="13" height="15" viewBox="0 0 13 15"><rect x="0.6" y="0.5" width="11" height="13" rx="1.6" stroke="#8a93b2" stroke-width="1.1" fill="none"/><rect x="2.6" y="2.5" width="6.9" height="2" rx="0.9" stroke="#8a93b2" stroke-width="1" fill="none"/><g fill="#8a93b2"><rect x="1.8" y="7.1" width="1.3" height="1.2"/><rect x="5.3" y="7.1" width="1.3" height="1.2"/><rect x="8.5" y="7.1" width="1.3" height="1.2"/><rect x="1.8" y="9.9" width="1.3" height="1.2"/><rect x="5.3" y="9.9" width="1.3" height="1.2"/><rect x="8.5" y="9.9" width="1.3" height="1.2"/></g></svg>
<svg class="a" style="left:1139px;top:584px" width="13" height="15" viewBox="0 0 13 15"><rect x="0.6" y="0.5" width="11" height="13" rx="1.6" stroke="#8a93b2" stroke-width="1.1" fill="none"/><rect x="2.6" y="2.5" width="6.9" height="2" rx="0.9" stroke="#8a93b2" stroke-width="1" fill="none"/><g fill="#8a93b2"><rect x="1.8" y="7.1" width="1.3" height="1.2"/><rect x="5.3" y="7.1" width="1.3" height="1.2"/><rect x="8.5" y="7.1" width="1.3" height="1.2"/><rect x="1.8" y="9.9" width="1.3" height="1.2"/><rect x="5.3" y="9.9" width="1.3" height="1.2"/><rect x="8.5" y="9.9" width="1.3" height="1.2"/></g></svg>
<div class="a" style="right:752px;top:616px;font-size:12px;line-height:28px;color:#333;">备注</div>
<div class="a" style="left:672px;top:614px;width:489px;height:28px;border:1px solid #ccd2e4;border-radius:4px;background:#fff"></div>
<div class="a" style="left:968px;top:672px;width:60px;height:28px;background:#eeeeee;border-radius:3px;font-size:12px;line-height:30px;color:#333;text-align:center">修改</div>
<div class="a" style="left:1034px;top:672px;width:60px;height:28px;background:#dcdcdc;border-radius:3px;font-size:12px;line-height:30px;color:#999;text-align:center">确定</div>
<div class="a" style="left:1100px;top:672px;width:60px;height:28px;background:#dcdcdc;border-radius:3px;font-size:12px;line-height:30px;color:#999;text-align:center">取消</div>
</body></html>
